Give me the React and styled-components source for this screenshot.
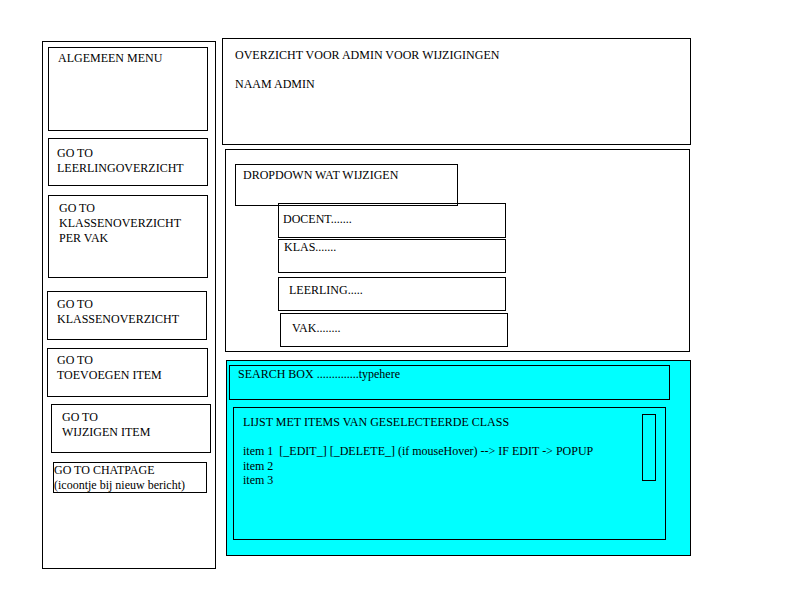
import React from 'react';
import styled, { createGlobalStyle } from 'styled-components';

const GlobalStyle = createGlobalStyle`
  html, body {
    margin: 0;
    padding: 0;
    background: #fff;
  }
  body {
    font-family: "Liberation Serif", "Times New Roman", serif;
    font-size: 12px;
    color: #000;
  }
`;

const Page = styled.div`
  display: flex;
  align-items: flex-start;
  width: 800px;
  height: 600px;
`;

const Sidebar = styled.nav`
  box-sizing: border-box;
  margin: 41px 0 0 42px;
  width: 174px;
  height: 528px;
  border: 1px solid #000;
  display: flex;
  flex-direction: column;
  align-items: flex-start;
`;

const MenuBox = styled.div`
  box-sizing: border-box;
  border: 1px solid #000;
  width: ${p => p.$w || 160}px;
  height: ${p => p.$h}px;
  margin: ${p => p.$top}px 0 0 ${p => p.$left}px;
  padding: ${p => p.$pt}px 0 0 ${p => p.$pl}px;
  line-height: 15px;
  white-space: nowrap;
`;

const Main = styled.main`
  margin: 38px 0 0 6px;
  display: flex;
  flex-direction: column;
  align-items: flex-start;
`;

const Panel = styled.section`
  box-sizing: border-box;
  border: 1px solid #000;
  width: ${p => p.$w}px;
  height: ${p => p.$h}px;
  margin: ${p => p.$top || 0}px 0 0 ${p => p.$left || 0}px;
  background: ${p => (p.$cyan ? '#00ffff' : '#fff')};
  display: flex;
  flex-direction: column;
  align-items: flex-start;
`;

const HeaderText = styled.div`
  padding: 9px 0 0 12px;
  line-height: 14.5px;

  p {
    margin: 0 0 14.5px;
  }
`;

const Box = styled.div`
  box-sizing: border-box;
  border: 1px solid #000;
  width: ${p => p.$w}px;
  height: ${p => p.$h}px;
  margin: ${p => p.$top}px 0 0 ${p => p.$left}px;
  padding: ${p => p.$pt}px 0 0 ${p => p.$pl}px;
  line-height: 15px;
  white-space: pre;
`;

const ListBox = styled.div`
  box-sizing: border-box;
  border: 1px solid #000;
  width: 433px;
  height: 133px;
  margin: 7px 0 0 6px;
  display: flex;
  align-items: flex-start;
`;

const ListText = styled.div`
  flex: 1;
  padding: 7px 0 0 9px;
  line-height: 14.5px;
  white-space: pre;

  p {
    margin: 0 0 14.5px;
  }
`;

const Scrollbar = styled.div`
  box-sizing: border-box;
  width: 14px;
  height: 67px;
  margin: 6px 9px 0 0;
  border: 1px solid #000;
`;

const menu = [
  { text: 'ALGEMEEN MENU', left: 5, top: 5, h: 84, pt: 3, pl: 9 },
  { text: 'GO TO\nLEERLINGOVERZICHT', left: 5, top: 7, h: 48, pt: 7, pl: 8 },
  { text: 'GO TO\nKLASSENOVERZICHT\nPER VAK', left: 5, top: 9, h: 83, pt: 5, pl: 10 },
  { text: 'GO TO\nKLASSENOVERZICHT', left: 4, top: 13, h: 49, pt: 5, pl: 9 },
  { text: 'GO TO\nTOEVOEGEN ITEM', left: 4, top: 8, w: 161, h: 49, pt: 4, pl: 9 },
  { text: 'GO TO\nWIJZIGEN ITEM', left: 8, top: 7, h: 49, pt: 5, pl: 10 },
  { text: 'GO TO CHATPAGE\n(icoontje bij nieuw bericht)', left: 10, top: 9, w: 154, h: 31, pt: 0, pl: 0 },
];

const options = [
  { text: 'DOCENT.......', left: 52, top: -3, w: 228, h: 35, pt: 8, pl: 4 },
  { text: 'KLAS.......', left: 52, top: 1, w: 228, h: 34, pt: 0, pl: 5 },
  { text: 'LEERLING.....', left: 52, top: 4, w: 228, h: 34, pt: 5, pl: 10 },
  { text: 'VAK........', left: 54, top: 2, w: 228, h: 34, pt: 7, pl: 11 },
];

export default function App() {
  return (
    <>
      <GlobalStyle />
      <Page>
        <Sidebar>
          {menu.map((m, i) => (
            <MenuBox key={i} $left={m.left} $top={m.top} $w={m.w} $h={m.h} $pt={m.pt} $pl={m.pl}>
              {m.text.split('\n').map((line, j) => (
                <div key={j}>{line}</div>
              ))}
            </MenuBox>
          ))}
        </Sidebar>

        <Main>
          <Panel $w={469} $h={107}>
            <HeaderText>
              <p>OVERZICHT VOOR ADMIN VOOR WIJZIGINGEN</p>
              <p>NAAM ADMIN</p>
            </HeaderText>
          </Panel>

          <Panel $w={465} $h={203} $top={4} $left={3}>
            <Box $w={223} $h={42} $top={14} $left={9} $pt={3} $pl={7}>
              DROPDOWN WAT WIJZIGEN
            </Box>
            {options.map((o, i) => (
              <Box key={i} $w={o.w} $h={o.h} $top={o.top} $left={o.left} $pt={o.pt} $pl={o.pl}>
                {o.text}
              </Box>
            ))}
          </Panel>

          <Panel $w={465} $h={196} $top={8} $left={4} $cyan>
            <Box $w={441} $h={35} $top={4} $left={2} $pt={1} $pl={8}>
              SEARCH BOX ..............typehere
            </Box>
            <ListBox>
              <ListText>
                <p>LIJST MET ITEMS VAN GESELECTEERDE CLASS</p>
                <div>item 1  [_EDIT_] [_DELETE_] (if mouseHover) --&gt; IF EDIT -&gt; POPUP</div>
                <div>item 2</div>
                <div>item 3</div>
              </ListText>
              <Scrollbar />
            </ListBox>
          </Panel>
        </Main>
      </Page>
    </>
  );
}
